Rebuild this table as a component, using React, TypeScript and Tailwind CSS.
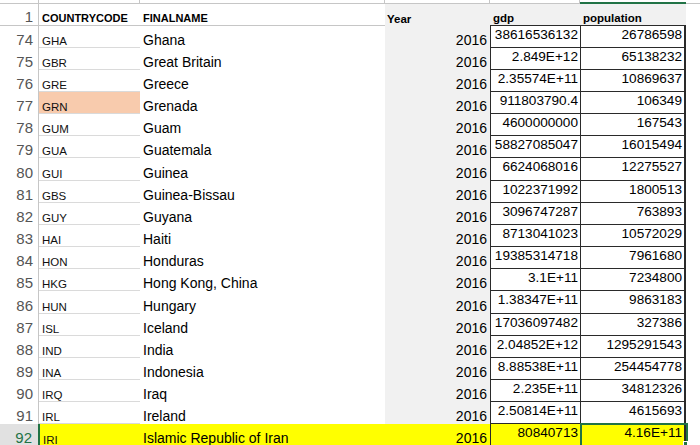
import React from "react";

type Rec = { n: number; code: string; name: string; gdp: string; pop: string };

const rows: Rec[] = [
  { n: 74, code: "GHA", name: "Ghana", gdp: "38616536132", pop: "26786598" },
  { n: 75, code: "GBR", name: "Great Britain", gdp: "2.849E+12", pop: "65138232" },
  { n: 76, code: "GRE", name: "Greece", gdp: "2.35574E+11", pop: "10869637" },
  { n: 77, code: "GRN", name: "Grenada", gdp: "911803790.4", pop: "106349" },
  { n: 78, code: "GUM", name: "Guam", gdp: "4600000000", pop: "167543" },
  { n: 79, code: "GUA", name: "Guatemala", gdp: "58827085047", pop: "16015494" },
  { n: 80, code: "GUI", name: "Guinea", gdp: "6624068016", pop: "12275527" },
  { n: 81, code: "GBS", name: "Guinea-Bissau", gdp: "1022371992", pop: "1800513" },
  { n: 82, code: "GUY", name: "Guyana", gdp: "3096747287", pop: "763893" },
  { n: 83, code: "HAI", name: "Haiti", gdp: "8713041023", pop: "10572029" },
  { n: 84, code: "HON", name: "Honduras", gdp: "19385314718", pop: "7961680" },
  { n: 85, code: "HKG", name: "Hong Kong, China", gdp: "3.1E+11", pop: "7234800" },
  { n: 86, code: "HUN", name: "Hungary", gdp: "1.38347E+11", pop: "9863183" },
  { n: 87, code: "ISL", name: "Iceland", gdp: "17036097482", pop: "327386" },
  { n: 88, code: "IND", name: "India", gdp: "2.04852E+12", pop: "1295291543" },
  { n: 89, code: "INA", name: "Indonesia", gdp: "8.88538E+11", pop: "254454778" },
  { n: 90, code: "IRQ", name: "Iraq", gdp: "2.235E+11", pop: "34812326" },
  { n: 91, code: "IRL", name: "Ireland", gdp: "2.50814E+11", pop: "4615693" },
  { n: 92, code: "IRI", name: "Islamic Republic of Iran", gdp: "80840713", pop: "4.16E+11" },
];

const Row: React.FC<{ r: Rec }> = ({ r }) => {
  const sel = r.n === 92;
  const orange = r.n === 77;
  const tall = r.n === 80 || r.n === 86;
  return (
    <div className={`flex shrink-0 ${tall ? "h-[23px]" : "h-[22px]"}`}>
      <div
        className={
          sel
            ? "w-[40px] shrink-0 flex items-end justify-end pr-[6px] pb-[1px] text-[15px] leading-[15px] bg-[#e1e1e1] text-[#217346] border-r-2 border-[#217346]"
            : "w-[39px] shrink-0 flex items-end justify-end pr-[5px] pb-[1px] text-[15px] leading-[15px] text-[#555] border-r border-[#c6c6c6]"
        }
      >
        {r.n}
      </div>
      <div
        className={`${sel ? "w-[100px] bg-[#ffff00]" : "w-[101px] border-b border-[#dadada]"} ${
          orange ? "bg-[#f8cbad]" : ""
        } shrink-0 flex items-end pl-[3px] text-[11.5px] leading-[11px] text-[#111]`}
      >
        {r.code}
      </div>
      <div
        className={`w-[245px] shrink-0 flex items-end pl-[3px] pb-[1px] text-[14px] leading-[14px] text-black ${
          sel ? "bg-[#ffff00]" : ""
        }`}
      >
        {r.name}
      </div>
      <div
        className={`w-[105px] shrink-0 flex items-end justify-end pr-[3px] pb-[1px] text-[14px] leading-[14px] text-black ${
          sel ? "bg-[#ffff00]" : "bg-[#f1f1f1]"
        }`}
      >
        2016
      </div>
      <div
        className={`w-[90px] shrink-0 flex items-start justify-end pr-[2px] pt-[2px] text-[13.6px] leading-[14px] text-black border-l border-b border-[#2a2a2a] ${
          sel ? "bg-[#ffff00]" : ""
        }`}
      >
        {r.gdp}
      </div>
      <div
        className={`relative w-[106px] shrink-0 flex items-start justify-end pr-[2px] pt-[2px] text-[13.6px] leading-[14px] text-black border-l border-r-2 border-b border-[#2a2a2a] ${
          sel ? "bg-[#ffff00]" : ""
        }`}
      >
        {r.pop}
        {sel && (
          <>
            <div className="absolute -left-px -top-px w-[108px] h-[30px] border-2 border-[#217346]" />
            <div className="absolute -right-[4px] top-[17px] w-[5px] h-[5px] bg-[#217346] border border-white" />
          </>
        )}
      </div>
      <div className="flex-1" />
    </div>
  );
};

export default function App() {
  return (
    <div
      className="w-[700px] h-[445px] overflow-hidden bg-white flex flex-col"
      style={{ fontFamily: '"Liberation Sans", Arial, sans-serif' }}
    >
      {/* column header strip, cut off */}
      <div className="flex h-[4px] shrink-0">
        <div className="w-[39px] shrink-0 border-r border-b border-[#c6c6c6]" />
        <div className="w-[101px] shrink-0 border-r border-b border-[#c6c6c6]" />
        <div className="w-[245px] shrink-0 border-r border-b border-[#c6c6c6]" />
        <div className="w-[105px] shrink-0 border-r border-b border-[#c6c6c6]" />
        <div className="w-[90px] shrink-0 border-r border-b border-[#c6c6c6]" />
        <div className="w-[106px] shrink-0 border-b-2 border-[#217346]" />
        <div className="flex-1 border-b border-[#c6c6c6]" />
      </div>

      {/* row 1 */}
      <div className="flex h-[22px] shrink-0 font-bold text-black">
        <div className="w-[39px] shrink-0 flex items-end justify-end pr-[5px] pb-[1px] text-[15px] leading-[15px] font-normal text-[#555] border-r border-b border-[#c6c6c6]">
          1
        </div>
        <div className="w-[101px] shrink-0 flex items-end pl-[3px] pb-[1px] text-[11px] leading-[11px] border-b border-[#c6c6c6]">
          COUNTRYCODE
        </div>
        <div className="w-[245px] shrink-0 flex items-end pl-[3px] pb-[1px] text-[11px] leading-[11px] border-b border-[#c6c6c6]">
          FINALNAME
        </div>
        <div className="w-[105px] shrink-0 flex items-end pl-[2px] pb-[1px] text-[11.5px] leading-[11px] bg-[#f1f1f1]">
          Year
        </div>
        <div className="w-[90px] shrink-0 flex items-end pl-[3px] pb-[1px] text-[11.5px] leading-[11px] bg-[#f1f1f1] border-b border-[#2a2a2a]">
          gdp
        </div>
        <div className="w-[106px] shrink-0 flex items-end pl-[3px] pb-[1px] text-[11.5px] leading-[11px] bg-[#f1f1f1] border-b border-[#2a2a2a]">
          population
        </div>
        <div className="flex-1" />
      </div>

      {rows.map((r) => (
        <Row key={r.n} r={r} />
      ))}
    </div>
  );
}
